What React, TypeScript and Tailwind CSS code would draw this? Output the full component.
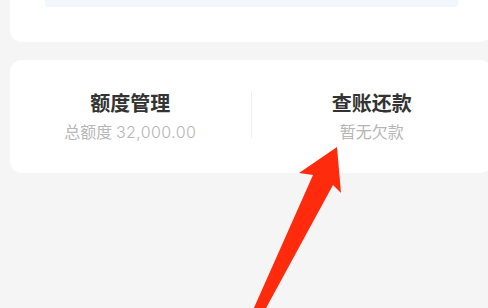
import React from 'react';

const Entry: React.FC<{ title: string; sub: React.ReactNode }> = ({ title, sub }) => (
  <div className="flex-1 flex flex-col items-center pt-[29px]">
    <div className="text-[20px] leading-[28px] font-bold text-[#333333]">{title}</div>
    <div className="mt-[3px] text-[16px] leading-[22px] text-[#b6b6b6]">{sub}</div>
  </div>
);

const App: React.FC = () => {
  return (
    <div
      className="relative w-full h-[308px] overflow-hidden bg-[#f5f5f5]"
      style={{ fontFamily: '"Noto Sans CJK SC", "Noto Sans", sans-serif' }}
    >
      {/* previous card, cut off at the top */}
      <div className="ml-[10px] w-[482px] h-[42px] bg-white rounded-b-[12px]">
        <div className="ml-[35px] w-[413px] h-[7px] bg-[#f2f6fe] rounded-b-[3px]" />
      </div>

      {/* quota / repayment card */}
      <div className="mt-[18px] ml-[10px] w-[482px] h-[113px] bg-white rounded-[12px] flex">
        <Entry
          title="额度管理"
          sub={
            <>
              总额度{' '}
              <span className="font-light tracking-[0.4px]" style={{ fontFamily: 'Inter, "Noto Sans", sans-serif' }}>
                32,000.00
              </span>
            </>
          }
        />
        <div className="w-px h-[46px] mt-[32px] bg-[#f0f0f0]" />
        <Entry title="查账还款" sub="暂无欠款" />
      </div>

      {/* red annotation arrow */}
      <svg
        className="absolute left-0 top-0 pointer-events-none"
        width="488"
        height="308"
        viewBox="0 0 488 308"
      >
        <polygon
          points="337,147 341,193 333,185 265,310 253,310 313,175 299,173"
          fill="#ff2b0c"
        />
      </svg>
    </div>
  );
};

export default App;
